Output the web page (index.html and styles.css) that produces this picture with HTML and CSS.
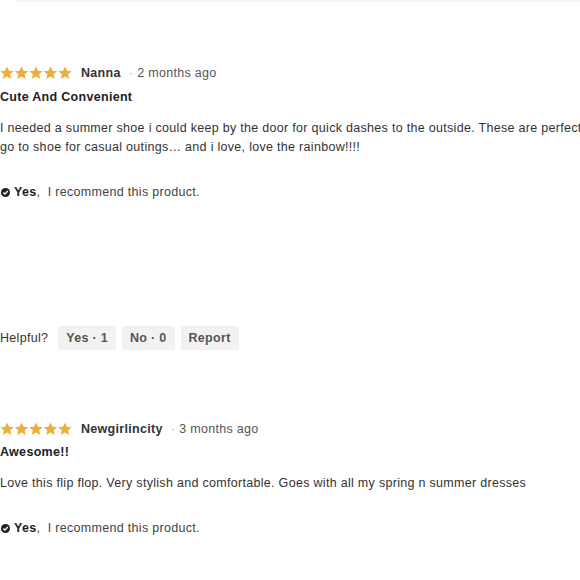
FILE: index.html
```html
<!DOCTYPE html>
<html lang="en">
<head>
<meta charset="utf-8">
<title>Reviews</title>
<link rel="stylesheet" href="styles.css">
</head>
<body>
<div class="page">
  <div class="top-rule"></div>

  <section class="review first">
    <div class="meta">
      <span class="stars" aria-label="5 out of 5 stars">
        <svg viewBox="0 0 72 14" width="72" height="14"><defs><path id="s" d="M7 0.4l2 4.35 4.75.45-3.6 3.15 1.08 4.7L7 10.6l-4.23 2.45 1.08-4.7-3.6-3.15 4.75-.45z"/></defs><use href="#s" x="0"/><use href="#s" x="14.5"/><use href="#s" x="29"/><use href="#s" x="43.5"/><use href="#s" x="58"/></svg>
      </span>
      <span class="author">Nanna</span>
      <span class="dot">·</span>
      <span class="date">2 months ago</span>
    </div>
    <h3 class="title">Cute And Convenient</h3>
    <p class="body">I needed a summer shoe i could keep by the door for quick dashes to the outside. These are perfect, my<br>go to shoe for casual outings… and i love, love the rainbow!!!!</p>
    <p class="recommend">
      <svg class="check" viewBox="0 0 10 10" width="9" height="9"><circle cx="5" cy="5" r="5" fill="#222"/><path d="M2.6 5.1l1.7 1.7 3.2-3.4" fill="none" stroke="#fff" stroke-width="1.5"/></svg>
      <b>Yes</b>,&nbsp; I recommend this product.
    </p>
    <div class="helpful">
      <span class="label">Helpful?</span>
      <button class="btn">Yes · 1</button>
      <button class="btn">No · 0</button>
      <button class="btn">Report</button>
    </div>
  </section>

  <section class="review second">
    <div class="meta">
      <span class="stars" aria-label="5 out of 5 stars">
        <svg viewBox="0 0 72 14" width="72" height="14"><use href="#s" x="0"/><use href="#s" x="14.5"/><use href="#s" x="29"/><use href="#s" x="43.5"/><use href="#s" x="58"/></svg>
      </span>
      <span class="author">Newgirlincity</span>
      <span class="dot">·</span>
      <span class="date">3 months ago</span>
    </div>
    <h3 class="title">Awesome!!</h3>
    <p class="body">Love this flip flop. Very stylish and comfortable. Goes with all my spring n summer dresses</p>
    <p class="recommend">
      <svg class="check" viewBox="0 0 10 10" width="9" height="9"><circle cx="5" cy="5" r="5" fill="#222"/><path d="M2.6 5.1l1.7 1.7 3.2-3.4" fill="none" stroke="#fff" stroke-width="1.5"/></svg>
      <b>Yes</b>,&nbsp; I recommend this product.
    </p>
  </section>
</div>
</body>
</html>
```

FILE: styles.css
```css
html, body {
  margin: 0;
  padding: 0;
  background: #fff;
  overflow: hidden;
}
body {
  font-family: "Liberation Sans", Arial, sans-serif;
  font-size: 12.5px;
  letter-spacing: 0.3px;
  color: #333;
}
.page {
  width: 580px;
  overflow: hidden;
}
.top-rule {
  height: 2px;
  margin-left: 15px;
  background: #f3f3f3;
}
.review.first {
  padding-top: 61px;
}
.review.second {
  padding-top: 69px;
}
.meta {
  display: flex;
  align-items: center;
  height: 20px;
  line-height: 20px;
}
.stars {
  display: flex;
  width: 72px;
  fill: #eeae3c;
}
.author {
  margin-left: 9px;
  font-weight: bold;
  color: #333;
}
.dot {
  margin-left: 8px;
  margin-right: 4px;
  color: #aaa;
}
.date {
  color: #555;
}
.title {
  margin: 4px 0 0;
  font-size: 12.5px;
  line-height: 20px;
  font-weight: bold;
  color: #222;
}
.second .title {
  margin-top: 3px;
}
.body {
  margin: 12px 0 0;
  line-height: 19px;
  white-space: nowrap;
  color: #333;
}
.recommend {
  margin: 25px 0 0;
  line-height: 20px;
  display: flex;
  align-items: center;
  color: #444;
}
.recommend .check {
  margin: 0 4px 0 1px;
}
.recommend b {
  color: #222;
}
.helpful {
  margin-top: 124px;
  display: flex;
  align-items: center;
  height: 24px;
  gap: 6px;
}
.helpful .label {
  margin-right: 4px;
  color: #333;
}
.btn {
  height: 24px;
  padding: 0 8px;
  border: none;
  border-radius: 2px;
  background: #f2f2f2;
  font-family: inherit;
  font-size: 12.5px;
  letter-spacing: 0.3px;
  font-weight: bold;
  color: #555;
}
```
